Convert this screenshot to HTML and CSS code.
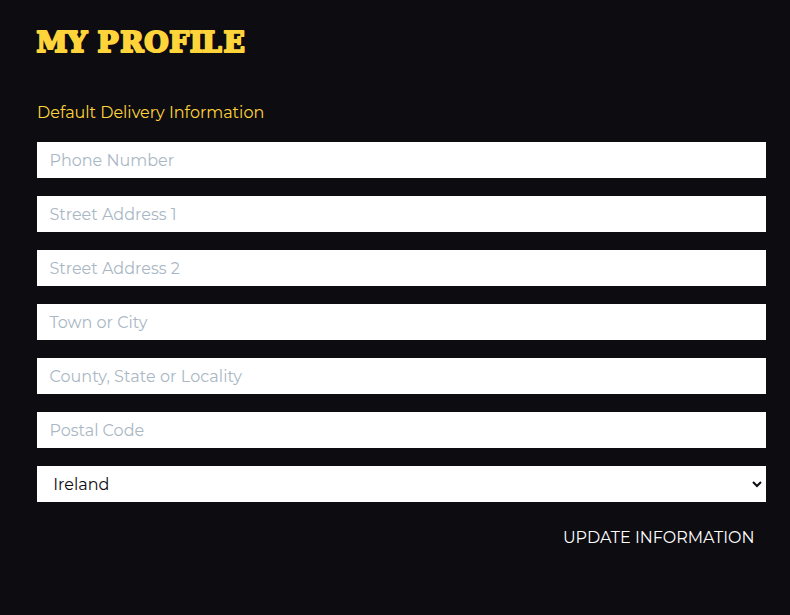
FILE: index.html
```html
<!DOCTYPE html>
<html lang="en">
<head>
<meta charset="utf-8">
<title>My Profile</title>
<link rel="stylesheet" href="styles.css">
</head>
<body>
<main class="profile">
  <h1 class="title"><svg class="title-art" width="212" height="40"><text x="-0.5 30.2 54 60.4 83.2 107.2 132.2 152.8 165 186.5" y="30.6">MY PROFILE</text></svg></h1>
  <p class="subtitle">Default Delivery Information</p>
  <form class="form">
    <input class="field" type="text" placeholder="Phone Number">
    <input class="field" type="text" placeholder="Street Address 1">
    <input class="field" type="text" placeholder="Street Address 2">
    <input class="field" type="text" placeholder="Town or City">
    <input class="field locality" type="text" placeholder="County, State or Locality">
    <input class="field" type="text" placeholder="Postal Code">
    <select class="field select"><option>Ireland</option></select>
    <button class="submit" type="button">UPDATE INFORMATION</button>
  </form>
</main>
</body>
</html>
```
FILE: styles.css
```css
* { box-sizing: border-box; }
body { margin: 0; background: #0d0c11; font-family: Montserrat, "Open Sans", sans-serif; font-size: 16px; }
.profile { padding: 21px 24px 0 37px; height: 615px; }
.title { margin: 0; height: 40px; }
.title-art { display: block; overflow: visible; }
.title-art text { font: 700 28px "DejaVu Serif", serif; fill: #ffd43b; stroke: #ffd43b; stroke-width: 2.2px; stroke-linejoin: round; }
.subtitle { margin: 40px 0 17px; line-height: 24px; color: #ffd43b; }
.form { display: flex; flex-direction: column; gap: 18px; }
.field { width: 100%; height: 36px; margin: 0; background: #fff; color: #0c0b10; padding: 1px 12px 0 12.4px; border: 0; border-radius: 0; font: inherit; outline: 0; }
.field::placeholder { color: #aab7c4; opacity: 1; }
.locality { letter-spacing: 0.06px; }
.select { padding: 1px 0 0 12.2px; border-right: 1px solid #fff; letter-spacing: 0; }
.submit { align-self: flex-end; padding: 6px 11.6px 6px 12px; border: 0; background: none; color: #fff; font: inherit; line-height: 24px; white-space: nowrap; }
```
